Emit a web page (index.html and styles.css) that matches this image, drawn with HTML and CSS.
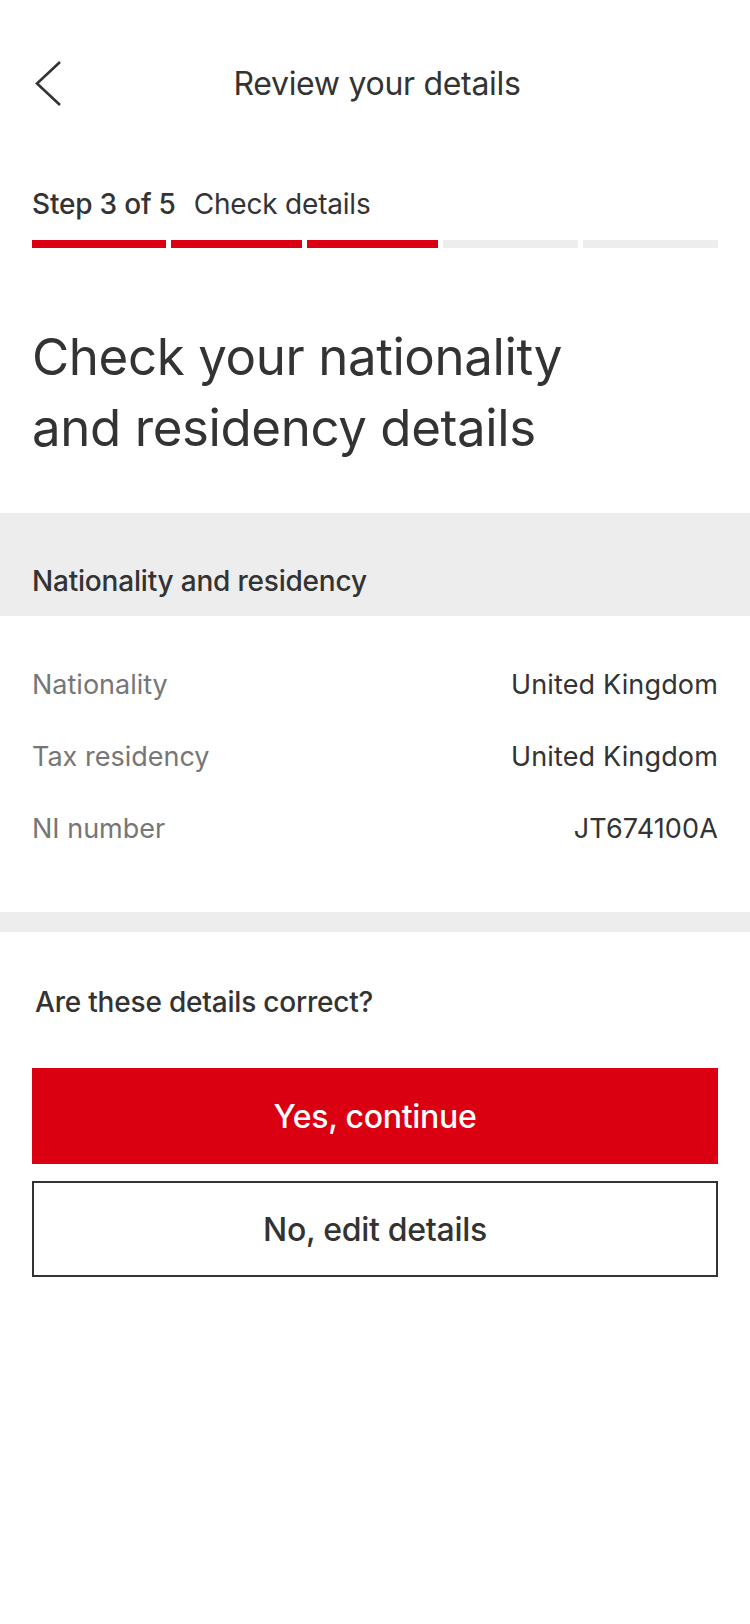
FILE: index.html
```html
<!DOCTYPE html>
<html lang="en">
<head>
<meta charset="utf-8">
<title>Review your details</title>
<link rel="stylesheet" href="styles.css">
</head>
<body>
<div class="screen">
  <header class="nav">
    <button class="back" aria-label="Back">
      <svg width="28" height="46" viewBox="0 0 28 46" fill="none">
        <polyline points="25,1 2,22.5 25,44" stroke="#333" stroke-width="2.6" stroke-linejoin="miter"/>
      </svg>
    </button>
    <h1 class="nav-title">Review your details</h1>
    <span></span>
  </header>

  <section class="progress">
    <p class="step"><strong>Step 3 of 5</strong><span class="step-name">Check details</span></p>
    <div class="bars">
      <span class="bar done"></span>
      <span class="bar done"></span>
      <span class="bar done"></span>
      <span class="bar"></span>
      <span class="bar"></span>
    </div>
  </section>

  <h2 class="heading">Check your nationality<br>and residency details</h2>

  <div class="section-head">Nationality and residency</div>

  <dl class="rows">
    <div class="row"><dt>Nationality</dt><dd>United Kingdom</dd></div>
    <div class="row"><dt>Tax residency</dt><dd>United Kingdom</dd></div>
    <div class="row"><dt>NI number</dt><dd>JT674100A</dd></div>
  </dl>

  <div class="divider"></div>

  <section class="confirm">
    <p class="question">Are these details correct?</p>
    <button class="btn primary">Yes, continue</button>
    <button class="btn secondary">No, edit details</button>
  </section>
</div>
</body>
</html>
```

FILE: styles.css
```css
* { box-sizing: border-box; }

html, body {
  margin: 0;
  padding: 0;
  background: #fff;
}

body {
  font-family: Inter, "Noto Sans", Roboto, sans-serif;
  color: #333;
  width: 750px;
  min-height: 1624px;
}

.screen {
  display: flex;
  flex-direction: column;
}

.nav {
  margin-top: 40px;
  height: 88px;
  display: grid;
  grid-template-columns: 1fr auto 1fr;
  align-items: center;
  padding: 0 32px;
}

.back {
  justify-self: start;
  background: none;
  border: 0;
  padding: 0 0 0 3px;
  display: flex;
  cursor: pointer;
}

.nav-title {
  margin: 0;
  font-size: 32px;
  font-weight: 400;
  line-height: 88px;
  letter-spacing: -0.3px;
  color: #333;
  transform: translateX(2px);
}

.progress {
  padding: 0 32px;
  margin-top: 60px;
}

.step {
  margin: 0;
  font-size: 28px;
  line-height: 32px;
  letter-spacing: -0.2px;
  display: flex;
  gap: 18px;
}

.step strong { font-weight: 500; }
.step-name { font-weight: 400; }

.bars {
  margin-top: 20px;
  display: grid;
  grid-template-columns: 134fr 131fr 131fr 135fr 135fr;
  gap: 5px;
}

.bar {
  height: 8px;
  background: #ededed;
}

.bar.done { background: #db0011; }

.heading {
  margin: 73px 32px 0;
  font-size: 51px;
  line-height: 71px;
  font-weight: 400;
  letter-spacing: -0.4px;
  color: #333;
}

.section-head {
  margin-top: 50px;
  background: #ededed;
  padding: 51px 32px 18px;
  font-size: 28px;
  line-height: 34px;
  font-weight: 500;
  letter-spacing: -0.2px;
}

.rows {
  margin: 0;
  padding: 33px 32px 47px;
  display: flex;
  flex-direction: column;
}

.row {
  display: flex;
  justify-content: space-between;
  align-items: baseline;
  height: 72px;
  line-height: 72px;
  font-size: 27px;
}

.row dt { color: #767676; font-weight: 400; }
.row dd { margin: 0; color: #333; letter-spacing: 0.15px; }

.divider {
  height: 20px;
  background: #ededed;
}

.confirm {
  padding: 53px 32px 0;
  display: flex;
  flex-direction: column;
}

.question {
  margin: 0 0 49px 3px;
  font-size: 28px;
  line-height: 34px;
  font-weight: 500;
  letter-spacing: -0.2px;
}

.btn {
  font-family: inherit;
  height: 96px;
  font-size: 32px;
  letter-spacing: -0.3px;
  cursor: pointer;
  border-radius: 0;
}

.btn.primary {
  background: #db0011;
  color: #fff;
  border: 0;
  font-weight: 500;
}

.btn.secondary {
  margin-top: 17px;
  background: #fff;
  color: #333;
  border: 2px solid #333;
  font-weight: 500;
}
```
